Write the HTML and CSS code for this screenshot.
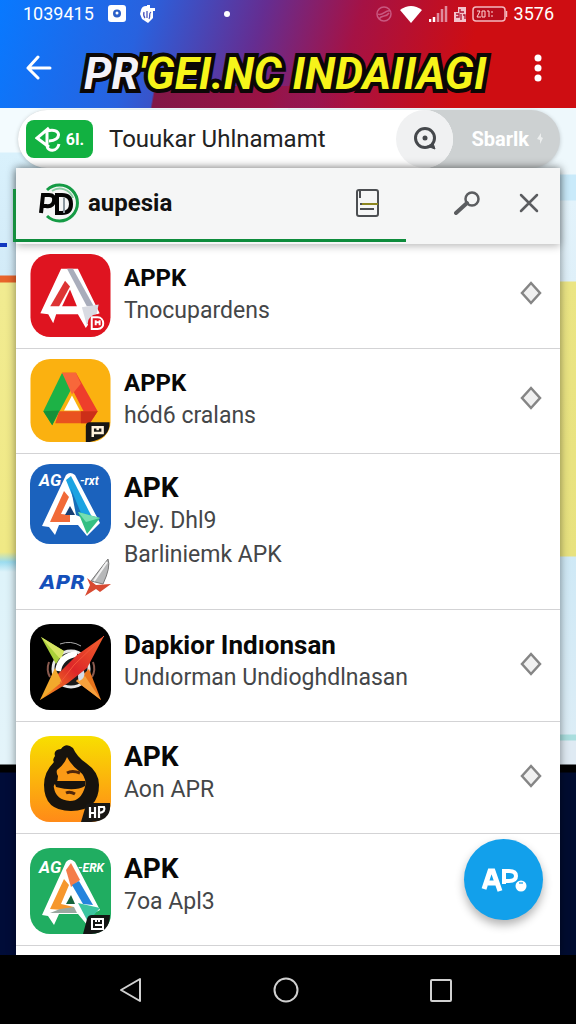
FILE: index.html
```
<!DOCTYPE html>
<html lang="id">
<head>
  <meta charset="UTF-8" />
  <meta name="viewport" content="width=device-width, initial-scale=1.0" />
  <title>APK</title>
  <link rel="stylesheet" href="styles.css">
</head>
<body>
  <header class="top">
    <div class="status">
      <span>1039415</span>
      <svg width="18" height="18" viewBox="0 0 18 18"><rect width="18" height="17" rx="3" fill="#fff"/><circle cx="9" cy="8.500" r="4" fill="#2a5fc8"/><circle cx="9" cy="8" r="1.500" fill="#fff"/></svg>
      <svg width="16" height="20" viewBox="0 0 16 20"><path d="M1 6q1-4 5-4h1V1h3v3h5v3h-2v7l-5 5-6-4-2-5z" fill="#fff"/><path d="M4 8q-1 4 1 6M7 7v7M11 8c-3 2 0 4-2 7" stroke="#4a55bd" stroke-width="1.300" fill="none"/></svg>
      <i class="dot"></i>
      <div class="status-right">
        <svg width="18" height="18" viewBox="0 0 18 18" fill="none" stroke="#c95880" stroke-width="1.500"><circle cx="9" cy="9" r="7"/><path d="M3 9c4 3 8-5 12-3M4 14c3-5 7-1 10-6"/></svg>
        <svg width="24" height="18" viewBox="0 0 24 18"><path d="M1 5Q12-3 23 5L12 18z" fill="#fff"/></svg>
        <svg width="19" height="18" viewBox="0 0 19 18"><path d="M1 17v-3M5 17v-5" stroke="#fff" stroke-width="2.500"/><path d="M9 17V8M13 17V4M17 17V1" stroke="#e08b9d" stroke-width="2.500"/></svg>
        <svg width="12" height="16" viewBox="0 0 12 16"><path d="M4 1h8v15H0V6h4z" fill="#f3c3cb"/><path d="M6 3v3h4M2 8h3v3H2M7 8v6M9 9h2v4" stroke="#b0122f" stroke-width="1.300" fill="none"/></svg>
        <svg width="36" height="18" viewBox="0 0 36 18"><rect x="1" y="2" width="32" height="14" rx="3" fill="#b80c1c" stroke="#f4b8bd" stroke-width="1.500"/><path d="M34.500 6v6" stroke="#f4b8bd" stroke-width="1.500"/><path d="M5 6h3l-3 6h4M10 6v6h3V6zM15 6h2v6M20 6v2M20 10v2" stroke="#ffd5d5" fill="none"/></svg>
        <span>3576</span>
      </div>
    </div>
    <div class="appbar">
      <button class="icon-btn" aria-label="Back">
        <svg width="26" height="26" viewBox="0 0 26 26" fill="none" stroke="#fff" stroke-width="3" stroke-linecap="round" stroke-linejoin="round"><path d="M24 13H2M12 2L2 13l10 10"/></svg>
      </button>
      <h1><span>PR</span>'GEI.NC INDAIIAGI</h1>
      <button class="icon-btn more" aria-label="More">
        <svg width="8" height="28" viewBox="0 0 8 28" fill="#fff"><circle cx="4" cy="4" r="3.500"/><circle cx="4" cy="14" r="3.500"/><circle cx="4" cy="24" r="3.500"/></svg>
      </button>
    </div>
  </header>

  <main>
    <form class="search">
      <div class="search-box">
        <span class="badge">
          <svg width="27" height="27" viewBox="0 0 27 27" fill="none" stroke="#fff" stroke-width="3"><path d="M14 2L2 12l12 9M12 5v15M12 5c15-4 15 10 2 10M12 20c1 6 10 6 12-2"/></svg>
          6I.
        </span>
        <input type="text" aria-label="Search" value="Touukar Uhlnamamt">
        <button class="search-btn" type="button" aria-label="Find">
          <svg width="24" height="24" viewBox="0 0 24 24" fill="none" stroke="#45484c" stroke-width="3"><circle cx="12" cy="11" r="9.500"/><path d="M14 19l8 3-2-6" fill="#45484c" stroke-width="1"/><circle cx="12" cy="11" r="2.500" fill="#45484c" stroke="none"/></svg>
        </button>
      </div>
      <button class="side-btn" type="button">Sbarlk <svg width="6" height="12" viewBox="0 0 6 12"><path d="M4 0v4l2 1-3 6V7L0 6z" fill="#eceeee"/></svg></button>
    </form>

    <section class="card">
      <div class="card-head">
        <svg class="logo" width="42" height="40" viewBox="0 0 42 40" fill="none">
          <path d="M9 7A18 18 0 1 1 9 33" stroke="#159b45" stroke-width="3"/>
          <path d="M14 8a14 14 0 0 1 21 7" stroke="#8ccca3" stroke-width="2"/>
          <path d="M3 30L5 12h6q6 0 5 6t-8 5H4" stroke="#050505" stroke-width="4"/>
          <path d="M19 30V12h5q9 0 9 9t-9 9z" stroke="#050505" stroke-width="4"/>
          <path d="M26 15v15" stroke="#8b98a0" stroke-width="2"/>
        </svg>
        <h2>aupesia</h2>
        <button class="icon-btn doc" aria-label="Notes">
          <svg width="24" height="28" viewBox="0 0 24 28" fill="none" stroke="#4c4f52" stroke-width="2"><rect x="1" y="1" width="21" height="26" rx="2"/><path d="M4 2v7M4 20h14M4 15h2"/><path d="M6 15h16" stroke="#8c8620"/></svg>
        </button>
        <button class="icon-btn key" aria-label="Search list">
          <svg width="26" height="24" viewBox="0 0 26 24" fill="none" stroke="#5b5d60"><circle cx="18" cy="8" r="6.500" stroke-width="2.500"/><path d="M13 12L2 22" stroke-width="4" stroke-linecap="round"/></svg>
        </button>
        <button class="icon-btn" aria-label="Close">
          <svg width="20" height="20" viewBox="0 0 20 20" stroke="#5b5d60" stroke-width="2.500" stroke-linecap="round"><path d="M2 2l16 16M18 2L2 18"/></svg>
        </button>
      </div>

      <ul class="list">
        <li class="row">
          <svg class="app" viewBox="0 0 81 84">
            <rect width="81" height="84" rx="20" fill="#df1420"/>
            <path d="M10 60L31 15h17l22 45-5 2-9 13-8-14H26l-3 9-5-9z" fill="#fff"/>
            <path d="M20 53l15-26 5 6-11 20z" fill="#dd3434"/><path d="M32 53l8-17 7 17z" fill="#df1420"/>
            <path d="M37 15h6l21 38h-7z" fill="#a9adbb"/><path d="M52 54l17-3-2 9-10 12z" fill="#d9dbe2"/>
            <circle cx="67" cy="70" r="9" fill="#df1420"/><path d="M62 76V64h6c7 0 8 12 0 12zM66 67v5M66 69h5M70 67v5" fill="none" stroke="#fff" stroke-width="2"/>
          </svg>
          <div class="info"><h3 class="tight">APPK</h3><p>Tnocupardens</p></div>
          <button class="icon-btn mark" aria-label="Pin"><svg width="22" height="24" viewBox="0 0 22 24"><path d="M11 2l9 10-9 10-9-10z" fill="#f0f0f0" stroke="#858585" stroke-width="2.500"/></svg></button>
        </li>
        <li class="row">
          <svg class="app" viewBox="0 0 81 84">
            <rect width="81" height="84" rx="20" fill="#fbb110"/>
            <path d="M32 14L13 53l9 14 20-38z" fill="#1db246"/><path d="M13 53l16-1-7 15z" fill="#159039"/>
            <path d="M32 14h14l22 39-8 12-18-35z" fill="#ee3e2b"/><path d="M32 14h14l5 11-9 11z" fill="#f8673a"/>
            <path d="M29 53h39l-8 12H25z" fill="#e9521f"/><path d="M51 53h17l-8 12h-9z" fill="#cc2e18"/><path d="M42 37l8 15H34z" fill="#fff"/>
            <path d="M56 84V68q0-4 4-4h20q1 16-20 20z" fill="#181613"/><path d="M63 79V69h10v6H63M68 69v3" fill="none" stroke="#fff2dc" stroke-width="2.500"/>
          </svg>
          <div class="info"><h3 class="tight">APPK</h3><p>hód6 cralans</p></div>
          <button class="icon-btn mark" aria-label="Pin"><svg width="22" height="24" viewBox="0 0 22 24"><path d="M11 2l9 10-9 10-9-10z" fill="#f0f0f0" stroke="#858585" stroke-width="2.500"/></svg></button>
        </li>
        <li class="row">
          <div class="apps">
            <svg class="app short" viewBox="0 0 81 80">
              <rect width="81" height="80" rx="20" fill="#1b62bd"/>
              <text x="9" y="22" class="tag">AG</text><text x="50" y="21" class="tag thin">-rxt</text>
              <path d="M12 62L36 11q4-4 9 0l25 48-13 13-9-11H29l-4 10-6-8z" fill="#fff"/>
              <path d="M20 58l14-31 5 6-8 17 9 1v7z" fill="#f16a38"/><path d="M36 16l5-4 22 43-13-4z" fill="#1ba3e2"/><path d="M41 25l12 29-7-3z" fill="#176eb8"/><path d="M35 51l5-9 5 9z" fill="#173e73"/>
              <path d="M48 48l22 6-13 16z" fill="#34bf83"/><path d="M48 48l22 6-14 4z" fill="#75dfb1"/>
            </svg>
            <svg class="apr" viewBox="0 0 81 42">
              <text x="10" y="33">APR</text>
              <path d="M61 25L78 3q3 8-5 25z" fill="#b7b8b9" stroke="#777" stroke-width="1"/><path d="M64 25L77 6" stroke="#f2f2f2" stroke-width="2"/>
              <path d="M57 22l9 7 15-1-11 8-4-3-11 7 5-11z" fill="#d84a32"/>
            </svg>
          </div>
          <div class="info"><h3>APK</h3><p>Jey. Dhl9</p><p>Barliniemk APK</p></div>
        </li>
        <li class="row tall">
          <svg class="app" viewBox="0 0 81 86">
            <defs>
              <linearGradient id="g1" x2="1" y2="1"><stop stop-color="#a6d437"/><stop offset=".5" stop-color="#e8d848"/><stop offset="1" stop-color="#ee7716"/></linearGradient>
              <linearGradient id="g2" x1="1" x2="0" y2="1"><stop stop-color="#f0632a"/><stop offset=".5" stop-color="#dd2629"/><stop offset="1" stop-color="#fa9d1d"/></linearGradient>
            </defs>
            <rect width="81" height="86" rx="20" fill="#000"/>
            <path d="M19 38q-3 8 1 15M63 38q3 8-1 15" fill="none" stroke="#8a5a4e" stroke-width="2"/>
            <circle cx="41" cy="45" r="18" fill="#191a1b" stroke="#e7e7e7" stroke-width="3"/>
            <path d="M30 20q11-4 21 2" fill="none" stroke="#aaa"/>
            <path d="M11 13l23 15 2 10-8 9-18 29 17-12 22-16 5 2 18 26z" fill="none"/>
            <path d="M11 13l23 14-8 13z" fill="#a9cf3a"/><path d="M11 13l23 14-3 9z" fill="#d6e463"/>
            <path d="M46 57l13-12 12 31z" fill="#e8741c"/><path d="M46 57l9-5 16 24z" fill="#f6a03c"/>
            <path d="M28 47q2-15 19-17" stroke="#fff" stroke-width="6" fill="none"/><path d="M52 43q6 10-3 14-3-6 3-14z" fill="#d4dce8"/>
            <path d="M74 12L57 44 38 59 10 76l17-25 20-20z" fill="url(#g2)"/><path d="M10 76l15-32 7 14z" fill="#f2a92c"/><path d="M74 12L44 41 30 59" stroke="#f5543a" stroke-width="1" fill="none"/>
          </svg>
          <div class="info"><h3 class="long">Dapkior Indıonsan</h3><p>Undıorman Undioghdlnasan</p></div>
          <button class="icon-btn mark" aria-label="Pin"><svg width="22" height="24" viewBox="0 0 22 24"><path d="M11 2l9 10-9 10-9-10z" fill="#f0f0f0" stroke="#858585" stroke-width="2.500"/></svg></button>
        </li>
        <li class="row tall">
          <svg class="app" viewBox="0 0 81 86">
            <defs><linearGradient id="g3" x2="0" y2="1"><stop stop-color="#f8df00"/><stop offset="1" stop-color="#ff8a18"/></linearGradient></defs>
            <rect width="81" height="86" rx="20" fill="url(#g3)"/>
            <path d="M25 20q-2-6 6-7 5-7 12-1 4 9 13 15 13 9 13 22 0 26-28 26-27 0-27-26 0-13 10-23-2-2 1-6z" fill="#17130d"/>
            <path d="M37 21q5 9 12 14 8 6 6 16-4 14-15 14-14-1-16-13-1-4 2-4 2-4 2-8-2-3-1-6 7-5 10-13z" fill="#fa9a16"/>
            <path d="M24 45h31v5q-10 6-29 1z" fill="#17130d"/><path d="M37 37q5-3 13 0M36 57q4-2 9 1" stroke="#51270b" stroke-width="3" fill="none"/>
            <path d="M51 86l5-17q1-2 4-2h20q2 18-19 19z" fill="#181613"/><path d="M60 82V71v6h5V71v11M69 82V71h5q2 5-5 6" fill="none" stroke="#fff" stroke-width="2.200"/>
          </svg>
          <div class="info"><h3>APK</h3><p>Aon APR</p></div>
          <button class="icon-btn mark" aria-label="Pin"><svg width="22" height="24" viewBox="0 0 22 24"><path d="M11 2l9 10-9 10-9-10z" fill="#f0f0f0" stroke="#858585" stroke-width="2.500"/></svg></button>
        </li>
        <li class="row tall">
          <svg class="app" viewBox="0 0 81 86">
            <rect width="81" height="86" rx="20" fill="#20ad61"/>
            <text x="9" y="25" class="tag">AG</text><text x="48" y="24" class="tag thin">-ERK</text>
            <path d="M12 67L36 14q4-5 9 0l25 48-8 4-4 12-10-12H29l-5 11-6-9z" fill="#fff"/>
            <path d="M20 61l14-30 5 6-8 19 13 3v4z" fill="#f6972d"/><path d="M30 61l14-2 3 6H20z" fill="#9aa8a0"/><path d="M36 22l5-7 9 17-9 7z" fill="#f47d4a"/><path d="M42 37l7-4 14 24-10-1z" fill="#2384dd"/><path d="M36 56l5-9 4 9z" fill="#16633c"/>
            <path d="M48 55l22 5-12 14z" fill="#3bc5a0"/>
            <path d="M53 86l4-15q1-4 5-4h18q0 18-19 19z" fill="#131614"/><path d="M62 81V71h11v10zM66 71v3M69 71v3M65 77h7" fill="none" stroke="#fff" stroke-width="2"/>
          </svg>
          <div class="info"><h3>APK</h3><p>7oa Apl3</p></div>
        </li>
      </ul>
    </section>

    <button class="fab" aria-label="AP">
      <svg width="46" height="26" viewBox="0 0 46 26" fill="none" stroke="#fff"><path d="M3 22L9 4h3l7 20M7 16h9" stroke-width="5"/><path d="M23 17V4h5q7 0 7 5t-7 5h-5" stroke-width="4"/><circle cx="40" cy="19" r="5.500" fill="#fff" stroke="none"/><path d="M38 16h4" stroke="#6cc6f2" stroke-width="2"/></svg>
    </button>
  </main>

  <nav class="nav">
    <button class="icon-btn" aria-label="Back"><svg width="26" height="28" viewBox="0 0 26 28"><path d="M22 3v22L3 14z" fill="none" stroke="#d0d0d0" stroke-width="2" stroke-linejoin="round"/></svg></button>
    <button class="icon-btn" aria-label="Home"><svg width="26" height="28" viewBox="0 0 26 28"><circle cx="13" cy="14" r="11.500" fill="none" stroke="#d0d0d0" stroke-width="2"/></svg></button>
    <button class="icon-btn" aria-label="Recent"><svg width="26" height="28" viewBox="0 0 26 28"><rect x="3" y="4" width="20" height="21" rx="1" fill="none" stroke="#d0d0d0" stroke-width="2"/></svg></button>
  </nav>
</body>
</html>
```
FILE: styles.css
```
* {
  box-sizing: border-box;
}

body {
  margin: 0;
  height: 100vh;
  display: flex;
  flex-direction: column;
  overflow: hidden;
  font-family: Roboto, "Liberation Sans", sans-serif;
  background: #000;
}

h1, h2, h3, p, ul {
  margin: 0;
  padding: 0;
}

svg {
  display: block;
  flex-shrink: 0;
}

.icon-btn {
  display: flex;
  padding: 0;
  border: none;
  background: none;
  cursor: pointer;
}

/* top bar */
.top {
  flex-shrink: 0;
  position: relative;
  height: 108px;
  background: linear-gradient(106deg, #0879ff 0%, #2862df 24%, #652d91 44%, #a51245 60%, #ce0d12 80%);
  color: #fff;
}

.top::before {
  content: "";
  position: absolute;
  left: 26%;
  right: 40%;
  bottom: 0;
  height: 22px;
  background: linear-gradient(100deg, transparent 2%, #811747 3%, #9b1244 60%, transparent);
}

.status {
  display: flex;
  align-items: center;
  height: 28px;
  padding: 0 22px 0 23px;
  gap: 14px;
  font-size: 18px;
  line-height: 28px;
}

.dot {
  width: 6px;
  height: 6px;
  margin-left: 54px;
  border-radius: 50%;
  background: #fff;
}

.status-right {
  display: flex;
  align-items: center;
  gap: 6px;
  margin-left: auto;
}

.appbar {
  position: relative;
  display: flex;
  align-items: center;
  height: 80px;
  padding: 0 34px 0 26px;
}

.appbar h1 {
  margin: 12px 0 0 32px;
  font-size: 44px;
  font-style: italic;
  font-weight: bold;
  line-height: 60px;
  color: #f6f41a;
  white-space: nowrap;
  -webkit-text-stroke: 8px #0b0706;
  paint-order: stroke fill;
}

.appbar h1 span {
  color: #f4f2f8;
}

.more {
  margin-left: auto;
}

/* page behind the card, left and right edges */
main {
  flex: 1;
  min-height: 0;
  position: relative;
  display: flex;
  flex-direction: column;
  overflow: hidden;
  padding: 2px 16px 0;
  background:
    linear-gradient(#f3fbfe 44px, #d9f1fc 45px, #d3ebf8 167px, #e9642c 168px, #e9642c 174px, #f1eb91 175px, #f0e985 444px, #9bdcf0 454px, #def3fa 464px, #e4f4fa 656px, #000 657px, #000 664px, #000c38 665px) left / 50% 100% no-repeat,
    linear-gradient(#eef8fc 66px, #c9eafa 67px, #c9eafa 92px, #e3f3fb 93px, #dff0f9 173px, #ebe584 174px, #e8e27f 448px, #cfe9f6 449px, #dcedf6 626px, #a9dede 627px, #a9dede 632px, #dfeaf3 633px, #dfeaf3 656px, #000 657px, #000 664px, #000c30 665px) right / 50% 100% no-repeat;
}

/* scrap of a blue heading at the left edge */
main::before {
  content: "";
  position: absolute;
  left: 0;
  top: 135px;
  width: 7px;
  height: 4px;
  background: #1238c0;
}

.search {
  display: flex;
  flex-shrink: 0;
  height: 58px;
  margin-left: 2px;
  border-radius: 29px;
  background: #cdd1d2;
  box-shadow: 0 1px 4px rgba(0, 0, 0, 0.2);
}

.search-box {
  flex: 1;
  min-width: 0;
  display: flex;
  align-items: center;
  padding-left: 8px;
  border-radius: 29px;
  background: #fff;
}

.badge {
  display: flex;
  align-items: center;
  justify-content: center;
  gap: 4px;
  width: 67px;
  height: 38px;
  border-radius: 8px;
  background: #12b141;
  color: #fff;
  font-size: 16px;
  font-weight: bold;
}

.search-box input {
  flex: 1;
  min-width: 0;
  padding: 0 0 0 16px;
  border: none;
  outline: none;
  background: none;
  font-family: inherit;
  font-size: 24px;
  color: #222;
}

.search-btn {
  width: 57px;
  height: 58px;
  display: flex;
  align-items: center;
  justify-content: center;
  padding: 0;
  border: none;
  border-radius: 50%;
  background: #f0f1f2;
}

.side-btn {
  display: flex;
  align-items: center;
  gap: 8px;
  padding: 0 17px 0 18px;
  border: none;
  background: none;
  color: #fff;
  font-family: inherit;
  font-size: 20px;
  font-weight: 700;
}

/* card */
.card {
  position: relative;
  flex: 1;
  background: #fff;
  box-shadow: 0 0 9px rgba(0, 0, 0, 0.45);
}

.card-head {
  position: relative;
  display: flex;
  align-items: center;
  height: 76px;
  padding: 0 21px 6px 22px;
  background: #f5f6f6;
  box-shadow: 0 2px 8px rgba(0, 0, 0, 0.28);
}

.card-head::after {
  content: "";
  position: absolute;
  left: -3px;
  right: 154px;
  top: 21px;
  bottom: 2px;
  border-left: 3px solid #168f3e;
  border-bottom: 3px solid #0e8c3c;
  pointer-events: none;
}

.card-head h2 {
  margin-left: 8px;
  font-size: 24px;
  line-height: 32px;
  color: #111;
}

.doc {
  margin-left: auto;
  margin-right: 74px;
}

.key {
  margin-right: 39px;
}

.list {
  list-style: none;
}

.row {
  display: flex;
  align-items: flex-start;
  gap: 13px;
  padding: 10px 18px 11px 14px;
  border-bottom: 1px solid #d3d3d5;
}

.row.tall {
  padding-top: 14px;
  padding-bottom: 11px;
}

.app {
  width: 81px;
  height: 83px;
}

.tall .app {
  height: 86px;
}

.app.short {
  height: 80px;
}

.tag {
  fill: #fff;
  font-family: Roboto, sans-serif;
  font-size: 17px;
  font-style: italic;
  font-weight: bold;
}

.tag.thin {
  font-size: 12px;
}

.apr {
  width: 81px;
  height: 42px;
  margin-top: 12px;
}

.apr text {
  fill: #1550ba;
  font-family: "DejaVu Sans", sans-serif;
  font-size: 20px;
  font-style: italic;
  font-weight: bold;
}

.info {
  flex: 1;
  min-width: 0;
  padding-top: 8px;
}

.tall .info {
  padding-top: 5px;
}

.info h3 {
  font-size: 28px;
  font-weight: 700;
  line-height: 32px;
  color: #080808;
  white-space: nowrap;
}

.info h3.tight {
  font-size: 24px;
}

.info h3.long {
  font-size: 26px;
}

.info p {
  font-size: 23px;
  line-height: 34px;
  color: #444648;
  white-space: nowrap;
}

.mark {
  align-self: center;
  margin-bottom: 6px;
}

.fab {
  position: absolute;
  right: 33px;
  bottom: 35px;
  width: 79px;
  height: 81px;
  display: flex;
  align-items: center;
  justify-content: center;
  padding: 0;
  border: none;
  border-radius: 50%;
  background: #12a0eb;
  box-shadow: 0 5px 10px rgba(0, 0, 0, 0.3);
}

/* bottom navigation */
.nav {
  flex-shrink: 0;
  display: flex;
  align-items: center;
  justify-content: space-around;
  height: 69px;
  padding: 0 58px 0 54px;
  background: #000;
}
```
